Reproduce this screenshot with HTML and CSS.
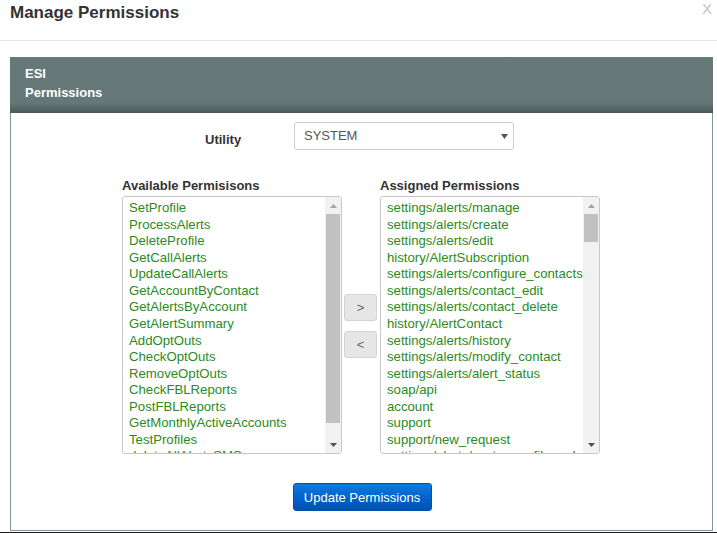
FILE: index.html
```html
<!DOCTYPE html>
<html>
<head>
<meta charset="utf-8">
<link rel="stylesheet" href="styles.css">
</head>
<body>
<div class="modal">
  <div class="modal-header">
    <h4 class="title">Manage Permissions</h4>
    <span class="close">X</span>
  </div>
  <div class="modal-body">
    <div class="panel">
      <div class="panel-heading">
        <div>ESI</div>
        <div>Permissions</div>
      </div>
      <div class="panel-body">
        <div class="utility-row">
          <label class="utility-label">Utility</label>
          <div class="select">
            <span>SYSTEM</span>
            <svg class="caret" width="7" height="5" viewBox="0 0 7 5"><path d="M0 0H7L3.5 5Z" fill="#555"/></svg>
          </div>
        </div>
        <div class="lists">
          <div class="col-label left">Available Permisisons</div>
          <div class="col-label right">Assigned Permissions</div>
          <div class="listbox left">
            <div class="items">
              <div>SetProfile</div>
              <div>ProcessAlerts</div>
              <div>DeleteProfile</div>
              <div>GetCallAlerts</div>
              <div>UpdateCallAlerts</div>
              <div>GetAccountByContact</div>
              <div>GetAlertsByAccount</div>
              <div>GetAlertSummary</div>
              <div>AddOptOuts</div>
              <div>CheckOptOuts</div>
              <div>RemoveOptOuts</div>
              <div>CheckFBLReports</div>
              <div>PostFBLReports</div>
              <div>GetMonthlyActiveAccounts</div>
              <div>TestProfiles</div>
              <div>deleteAllAlertsSMS</div>
            </div>
            <div class="scrollbar">
              <div class="sb-btn"><svg width="7" height="4" viewBox="0 0 7 4"><path d="M0 4H7L3.5 0Z" fill="#a3a3a3"/></svg></div>
              <div class="sb-track"><div class="thumb thumb-big"></div></div>
              <div class="sb-btn"><svg width="7" height="4" viewBox="0 0 7 4"><path d="M0 0H7L3.5 4Z" fill="#505050"/></svg></div>
            </div>
          </div>
          <div class="movers">
            <button class="mover">&gt;</button>
            <button class="mover">&lt;</button>
          </div>
          <div class="listbox right">
            <div class="items">
              <div>settings/alerts/manage</div>
              <div>settings/alerts/create</div>
              <div>settings/alerts/edit</div>
              <div>history/AlertSubscription</div>
              <div>settings/alerts/configure_contacts</div>
              <div>settings/alerts/contact_edit</div>
              <div>settings/alerts/contact_delete</div>
              <div>history/AlertContact</div>
              <div>settings/alerts/history</div>
              <div>settings/alerts/modify_contact</div>
              <div>settings/alerts/alert_status</div>
              <div>soap/api</div>
              <div>account</div>
              <div>support</div>
              <div>support/new_request</div>
              <div>settings/alerts/customer_file_upload</div>
            </div>
            <div class="scrollbar">
              <div class="sb-btn"><svg width="7" height="4" viewBox="0 0 7 4"><path d="M0 4H7L3.5 0Z" fill="#a3a3a3"/></svg></div>
              <div class="sb-track"><div class="thumb thumb-small"></div></div>
              <div class="sb-btn"><svg width="7" height="4" viewBox="0 0 7 4"><path d="M0 0H7L3.5 4Z" fill="#505050"/></svg></div>
            </div>
          </div>
        </div>
        <div class="actions">
          <button class="btn-primary">Update Permissions</button>
        </div>
      </div>
    </div>
  </div>
  <div class="bottom-line"></div>
</div>
</body>
</html>
```

FILE: styles.css
```css
* { box-sizing: border-box; }
html, body {
  margin: 0;
  padding: 0;
  background: #fff;
  font-family: "Liberation Sans", Arial, sans-serif;
  color: #333;
}
.modal {
  width: 717px;
  height: 533px;
  overflow: hidden;
}
.modal-header {
  height: 41px;
  border-bottom: 1px solid #e5e5e5;
  display: flex;
  justify-content: space-between;
  align-items: flex-start;
  padding: 0 5px 0 10px;
}
.title {
  margin: 0;
  padding-top: 3px;
  font-size: 17px;
  line-height: 20px;
  font-weight: bold;
  color: #333;
}
.close {
  font-size: 15px;
  line-height: 17px;
  color: #c2c2c2;
}
.modal-body {
  padding: 16px 4px 1px 10px;
}
.panel {
  width: 703px;
}
.panel-heading {
  height: 56px;
  padding: 7px 15px 0;
  color: #fff;
  font-size: 13px;
  font-weight: bold;
  line-height: 19px;
  background: linear-gradient(to bottom, #677879 0%, #667778 82%, #525f5f 95%, #4c5858 100%);
}
.panel-body {
  border: 1px solid #7d9898;
  border-top: none;
  height: 418px;
  padding: 9px 0 0;
}
.utility-row {
  display: flex;
  align-items: flex-start;
  padding-left: 194px;
}
.utility-label {
  font-size: 13px;
  font-weight: bold;
  line-height: 17px;
  padding-top: 9px;
  width: 89px;
}
.select {
  width: 220px;
  height: 28px;
  border: 1px solid #ccc;
  border-radius: 3px;
  display: flex;
  justify-content: space-between;
  align-items: center;
  padding: 0 5px 2px 9px;
  font-size: 13px;
  color: #555;
}
.caret { margin-top: 2px; }
.lists {
  margin-top: 28px;
  padding-left: 111px;
  display: grid;
  grid-template-columns: 220px 34px 220px;
  grid-template-rows: 16px 258px;
  column-gap: 2px;
  row-gap: 2px;
  justify-content: start;
}
.col-label {
  font-size: 13px;
  font-weight: bold;
  line-height: 16px;
}
.col-label.left { grid-column: 1; grid-row: 1; }
.col-label.right { grid-column: 3; grid-row: 1; }
.listbox.left { grid-column: 1; grid-row: 2; }
.listbox.right { grid-column: 3; grid-row: 2; }
.movers {
  grid-column: 2;
  grid-row: 2;
  align-self: center;
  display: flex;
  flex-direction: column;
  gap: 10px;
  margin-top: 1px;
}
.listbox {
  border: 1px solid #c8c8c8;
  border-radius: 3px;
  display: flex;
  overflow: hidden;
}
.items {
  flex: 1;
  min-width: 0;
  overflow: hidden;
  padding: 3px 0 0 6px;
  font-size: 13.2px;
  line-height: 16.57px;
  color: #2b8a24;
  white-space: nowrap;
}
.scrollbar {
  width: 16px;
  flex: none;
  background: #f1f1f1;
  display: flex;
  flex-direction: column;
}
.sb-btn {
  height: 17px;
  display: flex;
  align-items: center;
  justify-content: center;
}
.sb-track {
  flex: 1;
  padding: 0 1px;
}
.thumb {
  background: #c1c1c1;
}
.thumb-big { height: 209px; }
.thumb-small { height: 28px; }
.mover {
  width: 33px;
  height: 27px;
  border: 1px solid #d4d4d4;
  border-radius: 3px;
  background: #e6e6e6;
  color: #666;
  font-family: "Liberation Sans", Arial, sans-serif;
  font-size: 13px;
  padding: 0;
}
.actions {
  margin-top: 29px;
  display: flex;
  justify-content: center;
  padding-left: 1px;
}
.btn-primary {
  width: 139px;
  height: 28px;
  border: 1px solid #0050aa;
  border-radius: 3px;
  background: linear-gradient(to bottom, #0f7ae0 0%, #0060c6 60%, #0052b4 100%);
  color: #fff;
  font-family: "Liberation Sans", Arial, sans-serif;
  font-size: 13px;
  padding: 0;
}
.bottom-line {
  height: 1px;
  margin-top: 0;
  background: #1f1f1f;
}
```
